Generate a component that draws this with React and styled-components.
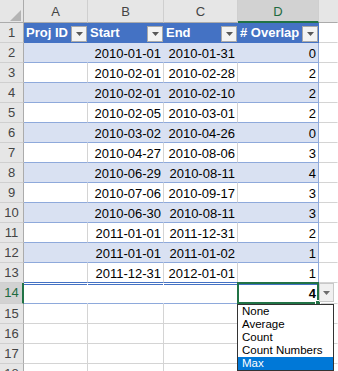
import React from 'react';
import styled, { createGlobalStyle, css } from 'styled-components';

const BLUE = '#4472C4';
const LINE = '#8EA9DB';
const BAND = '#D9E1F2';
const GRID = '#d4d4d4';
const HEAD = '#e6e6e6';
const HEAD_LINE = '#ababab';
const GREEN = '#217346';

const GlobalStyle = createGlobalStyle`
  html, body { margin: 0; padding: 0; background: #fff; overflow: hidden; }
  body { font-family: 'Liberation Sans', Arial, sans-serif; }
`;

const Sheet = styled.div`
  display: grid;
  grid-template-columns: 24px 64px 76px 74px 81px 1fr;
  grid-template-rows: 23px repeat(13, 20px) 21px repeat(4, 20px);
  width: 338px;
  height: 371px;
  overflow: hidden;
  font-size: 13px;
  color: #000;
`;

const Corner = styled.div`
  box-sizing: border-box;
  background: ${HEAD};
  border-right: 1px solid ${HEAD_LINE};
  border-bottom: 1px solid ${HEAD_LINE};
  display: flex;
  align-items: flex-end;
  justify-content: flex-end;
  padding: 0 2px 1px 0;
`;

const ColHead = styled.div`
  box-sizing: border-box;
  background: ${(p) => (p.$active ? '#d2d2d2' : HEAD)};
  border-right: 1px solid ${(p) => (p.$blank ? HEAD : '#cfcfcf')};
  border-bottom: ${(p) => (p.$active ? `2px solid ${GREEN}` : `1px solid ${HEAD_LINE}`)};
  color: ${(p) => (p.$active ? '#1e6b41' : '#444')};
  text-align: center;
  line-height: 18px;
  padding-top: 3px;
`;

const RowHead = styled.div`
  box-sizing: border-box;
  background: ${(p) => (p.$active ? '#d2d2d2' : HEAD)};
  border-right: ${(p) => (p.$active ? `2px solid ${GREEN}` : `1px solid ${HEAD_LINE}`)};
  border-bottom: 1px solid #cfcfcf;
  color: ${(p) => (p.$active ? '#1e6b41' : '#444')};
  text-align: center;
  line-height: 18px;
  padding-top: 1px;
  padding-left: ${(p) => (p.$active ? '1px' : '0')};
`;

const HeadCell = styled.div`
  box-sizing: border-box;
  background: ${BLUE};
  border-right: 1px solid ${BLUE};
  border-bottom: 1px solid ${BLUE};
  color: #fff;
  font-weight: bold;
  display: flex;
  justify-content: space-between;
  align-items: flex-end;
  padding-left: 2px;
  white-space: nowrap;
`;

const HeadLabel = styled.span`
  line-height: 18px;
  align-self: center;
  padding-top: 1px;
`;

const FilterButton = styled.span`
  box-sizing: border-box;
  flex: none;
  width: 16px;
  height: 16px;
  background: #f3f3f3;
  border: 1px solid #a9a9a9;
  display: flex;
  align-items: center;
  justify-content: center;
`;

const DataCell = styled.div`
  box-sizing: border-box;
  background: ${(p) => (p.$band ? BAND : '#fff')};
  border-right: 1px solid ${(p) => (p.$edge ? LINE : p.$band ? BAND : GRID)};
  border-bottom: 1px solid ${(p) => p.$bottom || LINE};
  text-align: right;
  line-height: 18px;
  padding: 2px 2px 0 2px;
  white-space: nowrap;
  overflow: hidden;
`;

const TotalCell = styled.div`
  box-sizing: border-box;
  background: #fff;
  border-top: 1px solid #fff;
  border-right: 1px solid ${(p) => (p.$edge ? LINE : '#fff')};
  border-bottom: 1px solid ${LINE};
  box-shadow: inset 0 1px 0 ${BLUE};
  text-align: right;
  font-weight: bold;
  line-height: 19px;
  padding: 0 2px;
  ${(p) =>
    p.$selected &&
    css`
      position: relative;
      z-index: 2;
    `}
`;

const GridCell = styled.div`
  box-sizing: border-box;
  background: #fff;
  border-right: 1px solid ${(p) => (p.$open ? '#fff' : GRID)};
  border-bottom: 1px solid ${GRID};
`;

const Selection = styled.div`
  position: absolute;
  left: -1px;
  top: -2px;
  width: 82px;
  height: 22px;
  box-sizing: border-box;
  border: 2px solid ${GREEN};
  pointer-events: none;
`;

const FillHandle = styled.div`
  position: absolute;
  right: -4px;
  bottom: -4px;
  width: 6px;
  height: 6px;
  box-sizing: border-box;
  background: ${GREEN};
  border: 1px solid #fff;
`;

const DropButton = styled.div`
  position: absolute;
  left: 81px;
  top: -1px;
  width: 15px;
  height: 19px;
  box-sizing: border-box;
  background: #f0f0f0;
  border: 1px solid #c8c8c8;
  display: flex;
  align-items: center;
  justify-content: center;
`;

const DropList = styled.ul`
  position: absolute;
  left: -1px;
  top: 20px;
  width: 97px;
  margin: 0;
  padding: 0;
  list-style: none;
  box-sizing: border-box;
  background: #fff;
  border: 1px solid #333;
  font-weight: normal;
  text-align: left;
`;

const DropItem = styled.li`
  height: 13px;
  line-height: 13px;
  font-size: 11.5px;
  padding-left: 4px;
  white-space: nowrap;
  background: ${(p) => (p.$selected ? '#0078D7' : '#fff')};
  color: ${(p) => (p.$selected ? '#fff' : '#000')};
`;

const Arrow = ({ color = '#595959' }) => (
  <svg width="7" height="4" viewBox="0 0 7 4">
    <polygon points="0,0 7,0 3.5,4" fill={color} />
  </svg>
);

const rows = [
  ['2010-01-01', '2010-01-31', 0],
  ['2010-02-01', '2010-02-28', 2],
  ['2010-02-01', '2010-02-10', 2],
  ['2010-02-05', '2010-03-01', 2],
  ['2010-03-02', '2010-04-26', 0],
  ['2010-04-27', '2010-08-06', 3],
  ['2010-06-29', '2010-08-11', 4],
  ['2010-07-06', '2010-09-17', 3],
  ['2010-06-30', '2010-08-11', 3],
  ['2011-01-01', '2011-12-31', 2],
  ['2011-01-01', '2011-01-02', 1],
  ['2011-12-31', '2012-01-01', 1],
];

const headers = ['Proj ID', 'Start', 'End', '# Overlap'];
const options = ['None', 'Average', 'Count', 'Count Numbers', 'Max'];

export default function App() {
  return (
    <>
      <GlobalStyle />
      <Sheet>
        <Corner>
          <svg width="11" height="11" viewBox="0 0 11 11">
            <polygon points="11,0 11,11 0,11" fill="#b4b4b4" />
          </svg>
        </Corner>
        {['A', 'B', 'C', 'D'].map((l) => (
          <ColHead key={l} $active={l === 'D'}>
            {l}
          </ColHead>
        ))}
        <ColHead $blank />

        <RowHead>1</RowHead>
        {headers.map((h) => (
          <HeadCell key={h}>
            <HeadLabel>{h}</HeadLabel>
            <FilterButton>
              <Arrow />
            </FilterButton>
          </HeadCell>
        ))}
        <GridCell $open />

        {rows.map((r, i) => {
          const n = i + 2;
          const band = n % 2 === 0;
          const bottom = n === 13 ? BLUE : LINE;
          return (
            <React.Fragment key={n}>
              <RowHead>{n}</RowHead>
              <DataCell $band={band} $bottom={bottom} />
              <DataCell $band={band} $bottom={bottom}>{r[0]}</DataCell>
              <DataCell $band={band} $bottom={bottom}>{r[1]}</DataCell>
              <DataCell $band={band} $bottom={bottom} $edge>{r[2]}</DataCell>
              <GridCell $open />
            </React.Fragment>
          );
        })}

        <RowHead $active>14</RowHead>
        <TotalCell />
        <TotalCell />
        <TotalCell />
        <TotalCell $edge $selected>
          4
          <Selection>
            <FillHandle />
          </Selection>
          <DropButton>
            <Arrow color="#6d6d6d" />
          </DropButton>
          <DropList>
            {options.map((o) => (
              <DropItem key={o} $selected={o === 'Max'}>
                {o}
              </DropItem>
            ))}
          </DropList>
        </TotalCell>
        <GridCell $open />

        {[15, 16, 17, 18].map((n) => (
          <React.Fragment key={n}>
            <RowHead>{n}</RowHead>
            <GridCell />
            <GridCell />
            <GridCell />
            <GridCell />
            <GridCell $open />
          </React.Fragment>
        ))}
      </Sheet>
    </>
  );
}
